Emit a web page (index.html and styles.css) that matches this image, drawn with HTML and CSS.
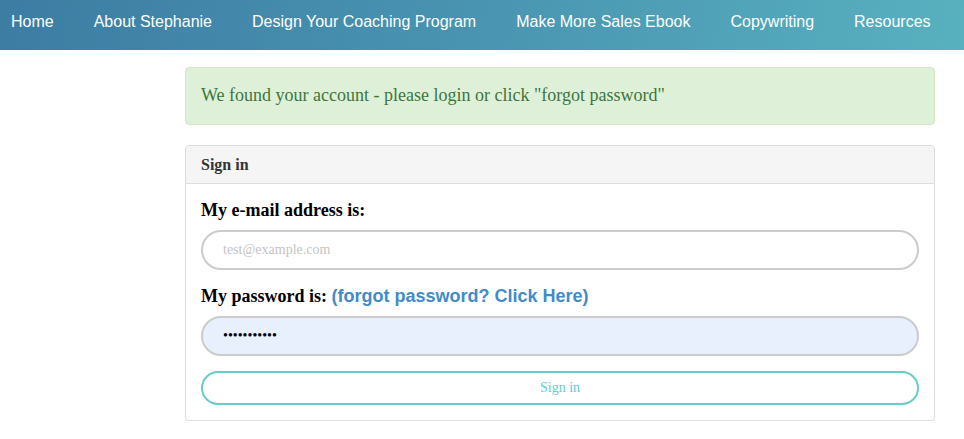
FILE: index.html
```html
<!DOCTYPE html>
<html lang="en">
<head>
    <meta charset="UTF-8">
    <meta name="viewport" content="width=device-width, initial-scale=1.0">
    <title>Sign in</title>
    <link rel="stylesheet" href="styles.css">
</head>
<body>
    <nav class="topnav">
        <a href="#">Home</a>
        <a href="#">About Stephanie</a>
        <a href="#">Design Your Coaching Program</a>
        <a href="#">Make More Sales Ebook</a>
        <a href="#">Copywriting</a>
        <a href="#">Resources</a>
    </nav>

    <div class="container">
        <div class="alert">
            We found your account - please login or click "forgot password"
        </div>

        <div class="panel">
            <div class="panel-heading">Sign in</div>
            <form class="panel-body">
                <label for="email">My e-mail address is:</label>
                <input type="text" id="email" name="email" placeholder="test@example.com">

                <label for="password">My password is: <a href="#" class="forgot">(forgot password? Click Here)</a></label>
                <input type="password" id="password" name="password" class="filled" value="12345678901">

                <button type="button" class="signin-button">Sign in</button>
            </form>
        </div>
    </div>
</body>
</html>
```

FILE: styles.css
```css
body {
    margin: 0;
    padding: 0;
    font-family: "Liberation Serif", "Times New Roman", serif;
    background-color: #fff;
}
.topnav {
    display: flex;
    align-items: center;
    gap: 40px;
    height: 50px;
    padding: 0 0 6px 11px;
    box-sizing: border-box;
    background: linear-gradient(100deg, #3d7ca3 0%, #4892b0 45%, #58b1bf 100%);
}
.topnav a {
    color: #fff;
    text-decoration: none;
    font-family: "Liberation Sans", Arial, sans-serif;
    font-size: 16px;
    white-space: nowrap;
}
.container {
    width: 750px;
    margin: 17px 0 0 185px;
}
.alert {
    background-color: #dff0d8;
    border: 1px solid #d6e9c6;
    border-radius: 4px;
    color: #3c763d;
    font-size: 18px;
    height: 58px;
    box-sizing: border-box;
    padding: 17px 15px 0;
    margin-bottom: 20px;
}
.panel {
    border: 1px solid #ddd;
    border-radius: 4px;
    box-shadow: 0 1px 1px rgba(0, 0, 0, 0.05);
}
.panel-heading {
    background-color: #f5f5f5;
    border-bottom: 1px solid #ddd;
    border-radius: 3px 3px 0 0;
    height: 38px;
    box-sizing: border-box;
    padding: 10px 15px 0;
    font-size: 16px;
    font-weight: bold;
    color: #333;
}
.panel-body {
    padding: 16px 15px 15px;
}
label {
    display: block;
    font-size: 18px;
    font-weight: bold;
    color: #000;
    line-height: 21px;
    margin-bottom: 9px;
}
.forgot {
    color: #428bca;
    text-decoration: none;
    font-family: "Liberation Sans", Arial, sans-serif;
    font-size: 18px;
}
input[type="text"],
input[type="password"] {
    display: block;
    width: 100%;
    height: 40px;
    box-sizing: border-box;
    border: 2px solid #ccc;
    border-radius: 20px;
    padding: 0 20px;
    font-family: "Liberation Serif", serif;
    font-size: 14px;
    margin-bottom: 16px;
    outline: none;
}
input::placeholder {
    color: #c4c4c4;
}
input.filled {
    background-color: #e8f0fe;
    margin-bottom: 15px;
}
.signin-button {
    display: block;
    width: 100%;
    height: 34px;
    border: 2px solid #66cccc;
    border-radius: 17px;
    background-color: #fff;
    color: #66cccc;
    font-family: "Liberation Serif", serif;
    font-size: 14px;
    cursor: pointer;
}
```
